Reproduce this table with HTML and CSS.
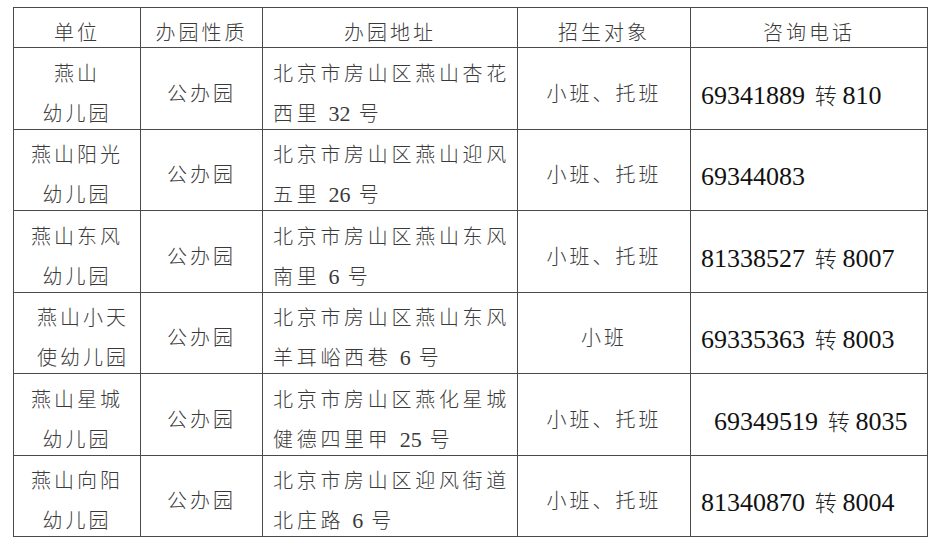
FILE: index.html
```html
<!DOCTYPE html>
<html lang="zh-CN">
<head>
<meta charset="utf-8">
<title>幼儿园招生信息</title>
<link rel="stylesheet" href="styles.css">
</head>
<body>
<table class="kg-table">
  <colgroup>
    <col class="c-unit"><col class="c-type"><col class="c-addr"><col class="c-age"><col class="c-tel">
  </colgroup>
  <thead>
    <tr>
      <th><span class="tx">单位</span></th>
      <th><span class="tx">办园性质</span></th>
      <th><span class="tx">办园地址</span></th>
      <th><span class="tx">招生对象</span></th>
      <th><span class="tx">咨询电话</span></th>
    </tr>
  </thead>
  <tbody>
    <tr>
      <td class="unit"><span class="tx">燕山</span><br><span class="tx">幼儿园</span></td>
      <td class="type"><span class="tx">公办园</span></td>
      <td class="addr"><span class="tx">北京市房山区燕山杏花</span><br><span class="tx">西里 <span class="num">32</span> 号</span></td>
      <td class="age"><span class="tx">小班、托班</span></td>
      <td class="tel"><span class="tx"><span class="num">69341889</span> <span class="zh">转</span> <span class="num">810</span></span></td>
    </tr>
    <tr>
      <td class="unit"><span class="tx">燕山阳光</span><br><span class="tx">幼儿园</span></td>
      <td class="type"><span class="tx">公办园</span></td>
      <td class="addr"><span class="tx">北京市房山区燕山迎风</span><br><span class="tx">五里 <span class="num">26</span> 号</span></td>
      <td class="age"><span class="tx">小班、托班</span></td>
      <td class="tel"><span class="tx"><span class="num">69344083</span></span></td>
    </tr>
    <tr>
      <td class="unit"><span class="tx">燕山东风</span><br><span class="tx">幼儿园</span></td>
      <td class="type"><span class="tx">公办园</span></td>
      <td class="addr"><span class="tx">北京市房山区燕山东风</span><br><span class="tx">南里 <span class="num">6</span> 号</span></td>
      <td class="age"><span class="tx">小班、托班</span></td>
      <td class="tel"><span class="tx"><span class="num">81338527</span> <span class="zh">转</span> <span class="num">8007</span></span></td>
    </tr>
    <tr>
      <td class="unit unit-indent"><span class="tx">燕山小天</span><br><span class="tx">使幼儿园</span></td>
      <td class="type"><span class="tx">公办园</span></td>
      <td class="addr"><span class="tx">北京市房山区燕山东风</span><br><span class="tx">羊耳峪西巷 <span class="num">6</span> 号</span></td>
      <td class="age"><span class="tx">小班</span></td>
      <td class="tel"><span class="tx"><span class="num">69335363</span> <span class="zh">转</span> <span class="num">8003</span></span></td>
    </tr>
    <tr>
      <td class="unit"><span class="tx">燕山星城</span><br><span class="tx">幼儿园</span></td>
      <td class="type"><span class="tx">公办园</span></td>
      <td class="addr"><span class="tx">北京市房山区燕化星城</span><br><span class="tx">健德四里甲 <span class="num">25</span> 号</span></td>
      <td class="age"><span class="tx">小班、托班</span></td>
      <td class="tel tel-indent"><span class="tx"><span class="num">69349519</span> <span class="zh">转</span> <span class="num">8035</span></span></td>
    </tr>
    <tr>
      <td class="unit"><span class="tx">燕山向阳</span><br><span class="tx">幼儿园</span></td>
      <td class="type"><span class="tx">公办园</span></td>
      <td class="addr"><span class="tx">北京市房山区迎风街道</span><br><span class="tx">北庄路 <span class="num">6</span> 号</span></td>
      <td class="age"><span class="tx">小班、托班</span></td>
      <td class="tel"><span class="tx"><span class="num">81340870</span> <span class="zh">转</span> <span class="num">8004</span></span></td>
    </tr>
  </tbody>
</table>
</body>
</html>
```

FILE: styles.css
```css
html, body {
  margin: 0;
  padding: 0;
  background: #ffffff;
}

body {
  padding: 7px 0 0 13px;
}

.kg-table {
  border-collapse: collapse;
  table-layout: fixed;
  width: 914px;
  font-family: "Noto Sans CJK SC", sans-serif;
  color: #3a3a3a;
}

.c-unit { width: 127px; }
.c-type { width: 122px; }
.c-addr { width: 255px; }
.c-age  { width: 173px; }
.c-tel  { width: 237px; }

.kg-table th,
.kg-table td {
  border: 1px solid #4a4a4a;
  padding: 0;
  vertical-align: middle;
  font-size: 20px;
  line-height: 40px;
  letter-spacing: 3px;
  font-weight: 300;
  white-space: nowrap;
}

.kg-table th {
  text-align: center;
  line-height: 39px;
}

.kg-table tbody tr:nth-child(odd) td {
  height: 81px;
}

.kg-table .tx {
  line-height: 20px;
  vertical-align: -4px;
}

.kg-table .unit,
.kg-table .type,
.kg-table .age {
  text-align: center;
}

.kg-table .unit-indent {
  padding-left: 12px;
}

.kg-table .addr {
  text-align: left;
  padding-left: 10px;
  letter-spacing: 3.7px;
}

.kg-table .num {
  font-family: "Liberation Serif", "Tinos", "Times New Roman", "DejaVu Serif", serif;
  font-size: 22px;
  letter-spacing: 0;
  font-weight: 400;
}

.kg-table .tel {
  text-align: left;
  padding-left: 10px;
  font-size: 26px;
  letter-spacing: 0;
  color: #1a1a1a;
}

.kg-table .tel .tx {
  font-size: 26px;
  line-height: 26px;
}

.kg-table .tel .num {
  font-size: 26px;
  color: #111111;
}

.kg-table .tel .zh {
  font-size: 22px;
  margin-left: 4px;
  color: #222222;
}

.kg-table .tel-indent {
  padding-left: 23px;
}
```
